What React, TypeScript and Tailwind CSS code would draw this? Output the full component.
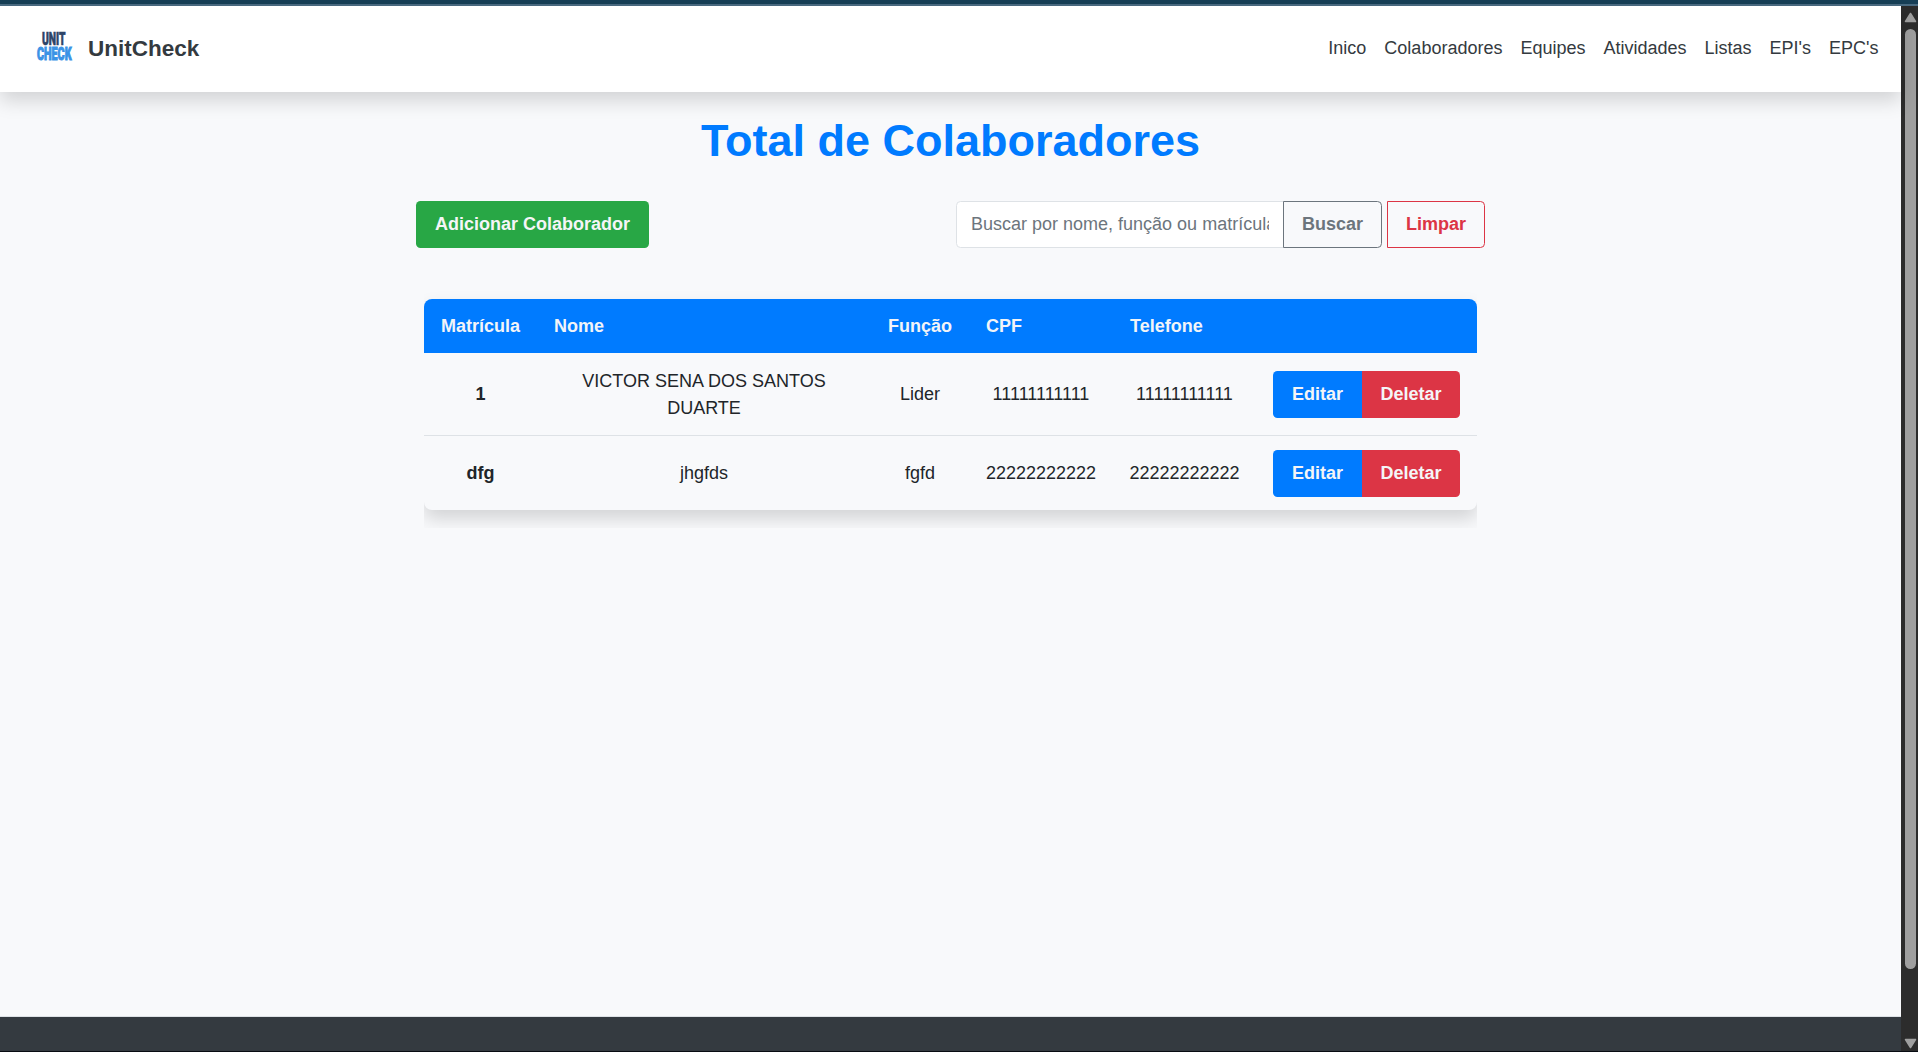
const links = ["Inico", "Colaboradores", "Equipes", "Atividades", "Listas", "EPI's", "EPC's"];

const rows = [
  { id: "1", name: "VICTOR SENA DOS SANTOS DUARTE", role: "Lider", cpf: "11111111111", phone: "11111111111", height: "h-[83px]" },
  { id: "dfg", name: "jhgfds", role: "fgfd", cpf: "22222222222", phone: "22222222222", height: "h-[74px]" },
];

function Logo() {
  return (
    <svg viewBox="0 0 36 30" className="h-[30px] w-9 overflow-visible" fontFamily="Roboto, sans-serif" fontWeight="900">
      <text x="5" y="13.4" fontSize="18.5" fill="#2d4468" stroke="#2d4468" strokeWidth=".7" textLength="23.5" lengthAdjust="spacingAndGlyphs">UNIT</text>
      <text x="0" y="28.3" fontSize="18" fill="#3b93e6" stroke="#3b93e6" strokeWidth="1" textLength="34.5" lengthAdjust="spacingAndGlyphs">CHECK</text>
    </svg>
  );
}

function Navbar() {
  return (
    <header className="relative z-10 flex h-[86px] shrink-0 items-start justify-between bg-white pr-[22.5px] pl-[37px] shadow-[0_9px_18px_rgba(0,0,0,0.15)]">
      <div className="flex items-start pt-[26px]">
        <Logo />
        <span className="ml-[15px] text-[22.5px] leading-[34px] font-bold text-[#343a40]">UnitCheck</span>
      </div>
      <nav className="flex gap-[18px] pt-[29px] text-[#343a40]">
        {links.map((link) => (
          <a key={link} href="#">{link}</a>
        ))}
      </nav>
    </header>
  );
}

function Toolbar() {
  return (
    <div className="mt-[33px] flex h-[47px] w-[1069px] justify-between font-bold">
      <button className="w-[233px] rounded-[4.5px] bg-[#28a745] text-[#f4f5f7]">Adicionar Colaborador</button>
      <div className="flex">
        <input
          className="w-[328px] rounded-l-[4.5px] border border-[#dee2e6] bg-white px-[14px] font-normal placeholder:text-[#6c757d]"
          placeholder="Buscar por nome, função ou matrícula"
        />
        <button className="-ml-px w-[99px] rounded-r-[4.5px] border border-[#6c757d] text-[#6c757d]">Buscar</button>
        <button className="ml-[5px] w-[98px] rounded-r-[4.5px] border border-[#dc3545] text-[#dc3545]">Limpar</button>
      </div>
    </div>
  );
}

function EmployeeTable() {
  return (
    <div className="mt-[33px] w-[1053px] overflow-hidden pt-[18px] pb-[18px]">
      <table className="w-full table-fixed border-separate border-spacing-0 overflow-hidden rounded-lg bg-[#f8f9fb] shadow-[0_9px_18px_rgba(0,0,0,0.15)]">
        <colgroup>
          <col className="w-[113px]" />
          <col className="w-[334px]" />
          <col className="w-[98px]" />
          <col className="w-[144px]" />
          <col className="w-[143px]" />
          <col />
        </colgroup>
        <thead>
          <tr className="h-[54px] bg-[#007bff] text-left text-[#f2f4f8]">
            <th className="px-[17px]">Matrícula</th>
            <th className="px-[17px]">Nome</th>
            <th className="px-[17px]">Função</th>
            <th className="px-[17px]">CPF</th>
            <th className="px-[17px]">Telefone</th>
            <th />
          </tr>
        </thead>
        <tbody className="[&>tr:first-child>td]:border-b [&>tr:first-child>td]:border-[#dee2e6]">
          {rows.map((row) => (
            <tr key={row.id} className="text-center text-[#212529]">
              <td className={`${row.height} font-bold`}>{row.id}</td>
              <td className="px-6 pt-px">{row.name}</td>
              <td>{row.role}</td>
              <td>{row.cpf}</td>
              <td>{row.phone}</td>
              <td>
                <div className="ml-[17px] flex h-[47px] w-[187px] overflow-hidden rounded-[4.5px] font-bold text-[#f4f5f7]">
                  <button className="w-[89px] bg-[#007bff]">Editar</button>
                  <button className="flex-1 bg-[#dc3545]">Deletar</button>
                </div>
              </td>
            </tr>
          ))}
        </tbody>
      </table>
    </div>
  );
}

function Scrollbar() {
  return (
    <div className="flex w-[17px] shrink-0 flex-col items-center bg-[#2c2c2c] pt-[6px] pl-[2px]">
      <svg viewBox="0 0 13 11" className="h-[11px] w-[13px]"><path d="M6.5 1.5 11.5 9.5H1.5Z" fill="#9f9f9f" stroke="#9f9f9f" strokeWidth="1.5" strokeLinejoin="round" /></svg>
      <div className="mt-[6px] h-[940px] w-[11px] rounded-full bg-[#9f9f9f]" />
      <svg viewBox="0 0 13 11" className="mt-[69px] h-[11px] w-[13px]"><path d="M6.5 9.5 11.5 1.5H1.5Z" fill="#9f9f9f" stroke="#9f9f9f" strokeWidth="1.5" strokeLinejoin="round" /></svg>
    </div>
  );
}

export default function App() {
  return (
    <div className="flex h-[1052px] w-[1918px] flex-col overflow-hidden bg-[#f8f9fb] font-['Liberation_Sans',Arial,sans-serif] text-[18px] leading-[27px]">
      <div className="h-[6px] shrink-0 border-b-2 border-[#4a6b82] bg-[#173f56]" />
      <div className="flex min-h-0 flex-1">
        <div className="flex min-w-0 flex-1 flex-col">
          <Navbar />
          <main className="flex min-h-0 flex-1 flex-col items-center">
            <h1 className="mt-[22px] text-[45px] leading-[54px] font-bold text-[#007bff]">Total de Colaboradores</h1>
            <Toolbar />
            <EmployeeTable />
          </main>
          <footer className="h-[35px] shrink-0 border-t border-[#dee2e6] bg-[#343a40]" />
        </div>
        <Scrollbar />
      </div>
      <div className="h-px shrink-0 bg-[#080c12]" />
    </div>
  );
}
